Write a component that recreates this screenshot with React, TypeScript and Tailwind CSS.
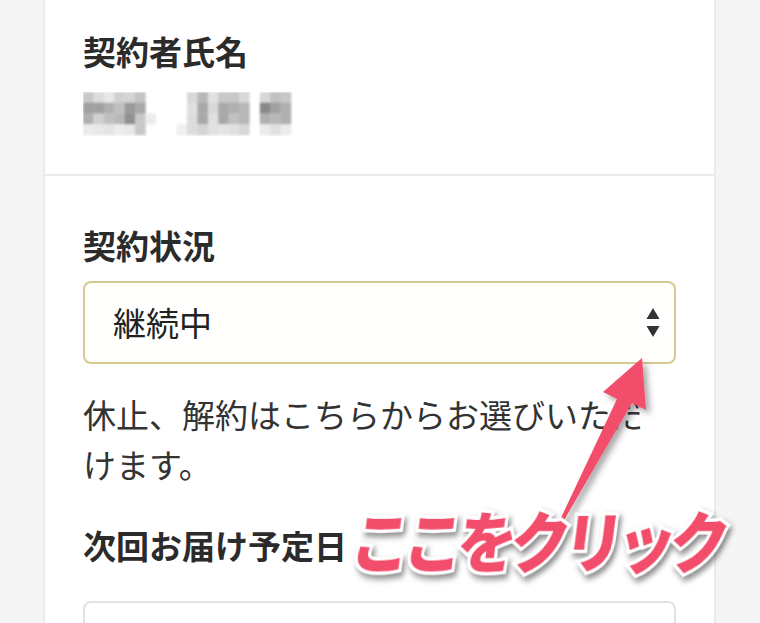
import type { ReactNode } from 'react';

const FONT = '"Noto Sans CJK JP", "Noto Sans", sans-serif';

// mosaic cells of the blurred contract holder name (rows x 20 columns, '' = empty)
const MOSAIC: string[][] = [
  ['#c8c8c8', '#dcdcdc', '#e8e8e8', '#d0d0d0', '#d4d4d4', '#c4c4c4', '', '', '', '', '#d8d8d8', '#b8b8b8', '#e0e0e0', '#c8c8c8', '#c8c8c8', '#d8d8d8', '', '#d8d8d8', '#c0c0c0', '#c8c8c8'],
  ['#a0a0a0', '#a0a0a0', '#b0b0b0', '#c0c0c0', '#9a9a9a', '#a8a8a8', '', '', '', '', '#e0e0e0', '#a8a8a8', '#d8d8d8', '#a8a8a8', '#b0b0b0', '#b8b8b8', '', '#888888', '#a0a0a0', '#b0b0b0'],
  ['#b0b0b0', '#d0d0d0', '#c0c0c0', '#b8b8b8', '#909090', '#c8c8c8', '#ececec', '', '', '', '#dcdcdc', '#a8a8a8', '#e0e0e0', '#a8a8a8', '#c0c0c0', '#b8b8b8', '', '#b0b0b0', '#b8b8b8', '#b0b0b0'],
  ['#ececec', '#e8e8e8', '#e4e4e4', '#ececec', '#e8e8e8', '#c8c8c8', '', '', '', '#f0f0f0', '#dcdcdc', '#d4d4d4', '#e0e0e0', '#e4e4e4', '#e0e0e0', '#d8d8d8', '', '#ececec', '#e0e0e0', '#ececec'],
];

function BlurredName() {
  const cw = 10.4;
  const ch = 10.75;
  return (
    <svg width="210" height="44" viewBox="0 0 210 44" className="mt-4 block">
      <g style={{ filter: 'blur(1px)' }}>
        {MOSAIC.map((row, r) =>
          row.map((fill, c) =>
            fill ? (
              <rect key={`${r}-${c}`} x={c * cw} y={r * ch} width={cw + 0.3} height={ch + 0.3} fill={fill} />
            ) : null,
          ),
        )}
      </g>
    </svg>
  );
}

function Label({ children }: { children: ReactNode }) {
  return <h3 className="text-[33px] font-bold leading-[50px] text-[#2b2b2b]">{children}</h3>;
}

function SortIcon() {
  return (
    <svg width="14" height="30" viewBox="0 0 14 30" className="text-[#333]">
      <path d="M7 0 L13.5 11 L0.5 11 Z" fill="currentColor" />
      <path d="M0.5 18 L13.5 18 L7 29 Z" fill="currentColor" />
    </svg>
  );
}

function ClickArrow() {
  return (
    <svg
      width="160"
      height="200"
      viewBox="540 340 160 200"
      className="pointer-events-none absolute left-[540px] top-[340px]"
    >
      <defs>
        <filter id="arrow-shadow" x="-30%" y="-30%" width="160%" height="160%">
          <feDropShadow dx="4" dy="4" stdDeviation="3" floodColor="#000" floodOpacity="0.35" />
        </filter>
      </defs>
      <path
        d="M559 522 L617 399 L603 392 L642 358 L646 410 L632 403 L563 522 Z"
        fill="#f24d6b"
        filter="url(#arrow-shadow)"
      />
    </svg>
  );
}

export default function App() {
  return (
    <div
      className="relative h-[623px] w-[760px] overflow-hidden bg-[#f5f5f5]"
      style={{ fontFamily: FONT }}
    >
      <div className="ml-[43px] mr-[44px] -mt-px h-[700px] border-x-2 border-[#ebebeb] bg-white">
        <section className="border-b-2 border-[#ebebeb] px-[38px] pb-[38px] pt-[27px]">
          <Label>契約者氏名</Label>
          <BlurredName />
        </section>

        <section className="px-[38px] pt-[44px]">
          <Label>契約状況</Label>
          <div className="mt-[11px] flex h-[83px] items-center justify-between rounded-lg border-2 border-[#d6ca90] bg-[#fffffd] pl-[28px] pr-[14px]">
            <span className="text-[33px] leading-none text-[#222]">継続中</span>
            <SortIcon />
          </div>
          <p className="mt-[25px] text-[33px] leading-[50px] text-[#333]">
            休止、解約はこちらからお選びいただけます。
          </p>

          <div className="mt-[31px]">
            <Label>次回お届け予定日</Label>
          </div>
          <div className="mt-[31px] h-[80px] rounded-lg border-2 border-[#e2e2e2] bg-white" />
        </section>
      </div>

      <ClickArrow />

      <div
        className="pointer-events-none absolute left-[352px] top-[506px] origin-left -skew-x-[8deg] scale-x-[0.9] whitespace-nowrap text-[66px] font-black leading-none tracking-[-7px] text-[#f24d6b] [-webkit-text-stroke:7px_white] [paint-order:stroke_fill]"
        style={{ filter: 'drop-shadow(3px 4px 3px rgba(0,0,0,0.45))' }}
      >
        ここをクリック
      </div>
    </div>
  );
}
